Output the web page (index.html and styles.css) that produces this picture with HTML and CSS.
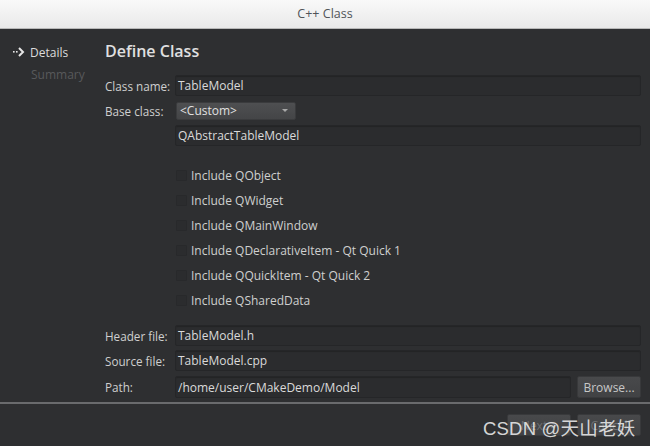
FILE: index.html
```html
<!DOCTYPE html>
<html>
<head>
<meta charset="utf-8">
<link rel="stylesheet" href="styles.css">
</head>
<body>
<div class="window">
  <header class="titlebar">C++ Class</header>
  <div class="main">
    <nav class="sidebar">
      <div class="step active">
        <svg class="arrow" width="12" height="10" viewBox="0 0 12 10">
          <rect x="0" y="4" width="1.6" height="1.6" fill="#e6e6e6"/>
          <rect x="3" y="4" width="1.6" height="1.6" fill="#e6e6e6"/>
          <path d="M6 1 L10 5 L6 9" fill="none" stroke="#e6e6e6" stroke-width="2"/>
        </svg>
        <span>Details</span>
      </div>
      <div class="step dim"><span>Summary</span></div>
    </nav>
    <section class="content">
      <h1 class="heading">Define Class</h1>
      <div class="form">
        <label class="lbl">Class name:</label>
        <div class="input">TableModel</div>
        <label class="lbl">Base class:</label>
        <div class="combo-row"><div class="combo"><span>&lt;Custom&gt;</span><span class="caret"></span></div></div>
        <span></span>
        <div class="input">QAbstractTableModel</div>
      </div>
      <div class="checks">
        <div class="check"><span class="box"></span>Include QObject</div>
        <div class="check"><span class="box"></span>Include QWidget</div>
        <div class="check"><span class="box"></span>Include QMainWindow</div>
        <div class="check"><span class="box"></span>Include QDeclarativeItem - Qt Quick 1</div>
        <div class="check"><span class="box"></span>Include QQuickItem - Qt Quick 2</div>
        <div class="check"><span class="box"></span>Include QSharedData</div>
      </div>
      <div class="form files">
        <label class="lbl">Header file:</label>
        <div class="input">TableModel.h</div>
        <label class="lbl">Source file:</label>
        <div class="input">TableModel.cpp</div>
        <label class="lbl path-lbl">Path:</label>
        <div class="path-row">
          <div class="input path">/home/user/CMakeDemo/Model</div>
          <div class="button">Browse...</div>
        </div>
      </div>
    </section>
  </div>
  <footer class="footer">
    <div class="button nav">Next &gt;</div>
    <div class="button nav">Cancel</div>
    <div class="watermark">CSDN @天山老妖</div>
  </footer>
</div>
</body>
</html>
```
FILE: styles.css
```css
* { box-sizing: border-box; }
html, body { margin: 0; padding: 0; }
body {
  width: 650px;
  height: 446px;
  background: #2e2f31;
  font-family: "Open Sans", "DejaVu Sans", sans-serif;
  font-size: 12px;
  color: #d2d2d2;
  overflow: hidden;
}
.window { width: 650px; height: 446px; display: flex; flex-direction: column; }
.titlebar {
  height: 29px;
  background: linear-gradient(#f9f9f9, #e9e9e9);
  border-bottom: 1px solid #b8b8b8;
  color: #505458;
  font-size: 12.5px;
  display: flex;
  align-items: center;
  justify-content: center;
  padding-bottom: 2px;
}
.main { display: flex; height: 373px; }
.sidebar { width: 105px; padding-top: 12px; }
.step { display: flex; align-items: center; height: 22px; padding-left: 13px; }
.step .arrow { width: 12px; margin-right: 5px; }
.step.dim span { padding-left: 18px; color: #58595b; }
.step.active span { color: #dcdcdc; }
.content { flex: 1; padding-right: 9px; }
.heading {
  margin: 11px 0 0 0;
  font-size: 16px;
  font-weight: 600;
  color: #e0e0e0;
  height: 22px;
  line-height: 22px;
}
.form {
  display: grid;
  grid-template-columns: 70px 1fr;
  grid-auto-rows: 21px;
  row-gap: 4px;
  align-items: center;
  margin-top: 13px;
}
.lbl { color: #cfcfcf; font-size: 11.7px; }
.input {
  height: 21px;
  background: #2b2c2e;
  border: 1px solid #252628;
  border-radius: 2px;
  padding-left: 2px;
  display: flex;
  align-items: center;
  color: #dadada;
  box-shadow: inset 0 1px 1px rgba(0,0,0,0.2);
}
.combo-row { display: flex; }
.combo {
  width: 120px;
  height: 18px;
  margin-left: 1px;
  background: linear-gradient(#4e4f51, #444547);
  border: 1px solid #3a3b3d;
  border-radius: 2px;
  display: flex;
  align-items: center;
  justify-content: space-between;
  padding: 0 7px 0 3px;
  color: #e0e0e0;
}
.caret {
  width: 0; height: 0;
  border-left: 3px solid transparent;
  border-right: 3px solid transparent;
  border-top: 3px solid #a8a8a8;
}
.checks { margin: 17px 0 0 71px; }
.check { height: 25px; display: flex; align-items: center; color: #cfcfcf; }
.box {
  width: 11px; height: 11px;
  background: #2b2c2e;
  border: 1px solid #28292b;
  margin-right: 4px;
  border-radius: 1px;
}
.files { margin-top: 12px; grid-template-rows: 21px 21px 23px; }
.path-lbl { margin-top: 1px; }
.path-row { display: flex; gap: 6px; height: 22px; margin-top: 1px; }
.path { flex: 1; height: 22px; }
.button {
  width: 64px;
  height: 22px;
  background: linear-gradient(#48494b, #414244);
  border: 1px solid #38393b;
  border-radius: 2px;
  color: #c8c8c8;
  display: flex;
  align-items: center;
  justify-content: center;
}
.footer {
  flex: 1;
  border-top: 2px solid #6a6b6d;
  position: relative;
  display: flex;
  justify-content: flex-end;
  gap: 6px;
  padding: 10px 9px 0 0;
}
.button.nav { color: #6e6f71; }
.watermark {
  position: absolute;
  left: 483px;
  top: 10px;
  font-family: "Liberation Sans", "Noto Sans CJK SC", sans-serif;
  font-size: 18.5px;
  letter-spacing: 0.2px;
  color: rgba(235,235,235,0.9);
}
```
